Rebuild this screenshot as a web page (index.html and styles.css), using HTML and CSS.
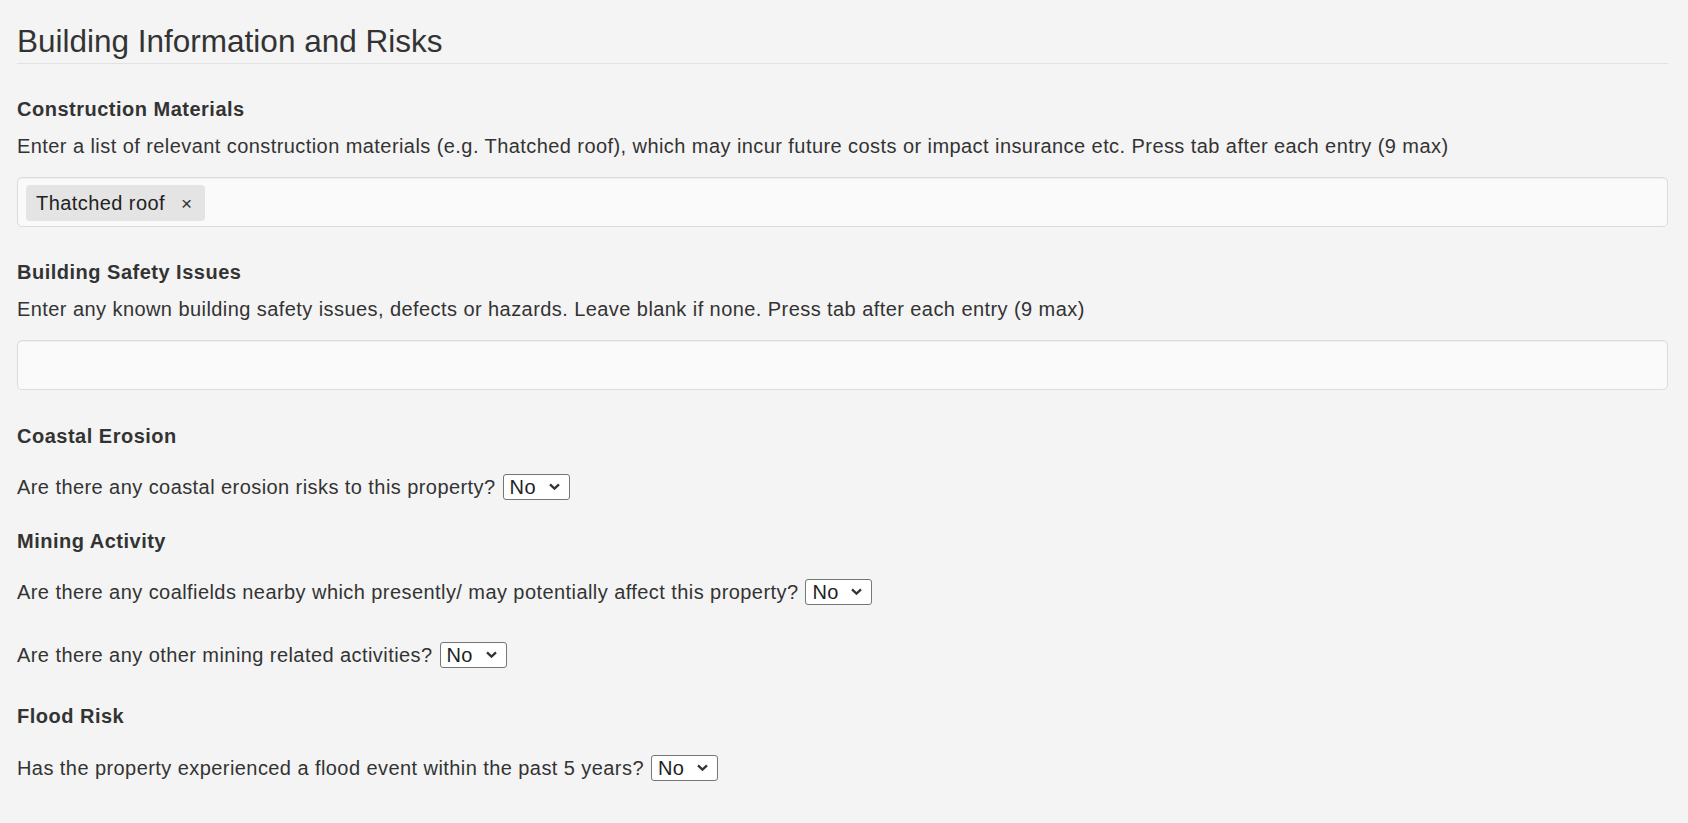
FILE: index.html
```html
<!DOCTYPE html>
<html lang="en">
<head>
<meta charset="utf-8">
<title>Building Information and Risks</title>
<link rel="stylesheet" href="styles.css">
</head>
<body>
<main class="page">
  <h3 class="page-title">Building Information and Risks</h3>

  <section class="field field--first">
    <div class="field-label">Construction Materials</div>
    <p class="field-help">Enter a list of relevant construction materials (e.g. Thatched roof), which may incur future costs or impact insurance etc. Press tab after each entry (9 max)</p>
    <div class="tag-input">
      <span class="tag"><span class="tag-text">Thatched roof</span><span class="tag-remove">×</span></span>
    </div>
  </section>

  <section class="field field--after-input">
    <div class="field-label">Building Safety Issues</div>
    <p class="field-help">Enter any known building safety issues, defects or hazards. Leave blank if none. Press tab after each entry (9 max)</p>
    <div class="tag-input"></div>
  </section>

  <section class="field field--coastal">
    <div class="field-label">Coastal Erosion</div>
    <p class="question">Are there any coastal erosion risks to this property? <span class="select-wrap"><select class="select"><option>No</option><option>Yes</option></select><svg class="chevron" viewBox="0 0 11 7" width="11" height="7"><path d="M1 1.3 L5.5 5.6 L10 1.3" fill="none" stroke="#333" stroke-width="2.3"/></svg></span></p>
  </section>

  <section class="field field--mining">
    <div class="field-label">Mining Activity</div>
    <p class="question">Are there any coalfields nearby which presently/ may potentially affect this property? <span class="select-wrap"><select class="select"><option>No</option><option>Yes</option></select><svg class="chevron" viewBox="0 0 11 7" width="11" height="7"><path d="M1 1.3 L5.5 5.6 L10 1.3" fill="none" stroke="#333" stroke-width="2.3"/></svg></span></p>
    <p class="question question--next">Are there any other mining related activities? <span class="select-wrap"><select class="select"><option>No</option><option>Yes</option></select><svg class="chevron" viewBox="0 0 11 7" width="11" height="7"><path d="M1 1.3 L5.5 5.6 L10 1.3" fill="none" stroke="#333" stroke-width="2.3"/></svg></span></p>
  </section>

  <section class="field field--flood">
    <div class="field-label">Flood Risk</div>
    <p class="question question--flood">Has the property experienced a flood event within the past 5 years? <span class="select-wrap"><select class="select"><option>No</option><option>Yes</option></select><svg class="chevron" viewBox="0 0 11 7" width="11" height="7"><path d="M1 1.3 L5.5 5.6 L10 1.3" fill="none" stroke="#333" stroke-width="2.3"/></svg></span></p>
  </section>
</main>
</body>
</html>
```

FILE: styles.css
```css
html, body {
  margin: 0;
  padding: 0;
}

body {
  background: #f4f4f4;
  color: #333333;
  font-family: "Liberation Sans", Arial, sans-serif;
  font-size: 20px;
  line-height: 28px;
  letter-spacing: 0.43px;
}

.page {
  padding: 23px 20px 40px 17px;
}

.page-title {
  margin: 0;
  padding-bottom: 4px;
  border-bottom: 1px solid #e2e2e2;
  font-size: 31.5px;
  font-weight: normal;
  line-height: 36px;
  letter-spacing: 0;
  color: #333333;
}

.field-label {
  font-weight: bold;
  letter-spacing: 0.5px;
}

.field--first { margin-top: 31px; }
.field--after-input { margin-top: 31px; }
.field--coastal { margin-top: 32px; }
.field--mining { margin-top: 26px; }
.field--flood { margin-top: 33px; }

.field-help {
  margin: 9px 0 0;
}

.tag-input {
  box-sizing: border-box;
  height: 50px;
  margin-top: 17px;
  padding: 7px 8px;
  background: #fafafa;
  border: 1px solid #dcdcdc;
  border-radius: 5px;
  box-shadow: inset 0 1px 1px rgba(0, 0, 0, 0.05);
}

.tag {
  display: inline-block;
  height: 36px;
  padding: 0 13px 0 10px;
  background: #e4e4e4;
  border-radius: 4px;
  color: #222222;
  line-height: 36px;
}

.tag-remove {
  margin-left: 16px;
  font-size: 19px;
  letter-spacing: 0;
  color: #333333;
}

.question {
  margin: 23px 0 0;
}

.question--next {
  margin-top: 35px;
}

.question--flood {
  margin-top: 24px;
}

.select-wrap {
  position: relative;
  display: inline-block;
  vertical-align: baseline;
  letter-spacing: 0;
}

.select {
  -webkit-appearance: none;
  appearance: none;
  box-sizing: border-box;
  width: 67px;
  height: 26px;
  margin: 0 0 0 1px;
  padding: 0 0 0 6px;
  background: #ffffff;
  border: 1px solid #767676;
  border-radius: 3px;
  color: #222222;
  font-family: inherit;
  font-size: 20px;
  letter-spacing: 0.4px;
  line-height: normal;
}

.chevron {
  position: absolute;
  right: 10px;
  top: 10px;
  pointer-events: none;
}
```
